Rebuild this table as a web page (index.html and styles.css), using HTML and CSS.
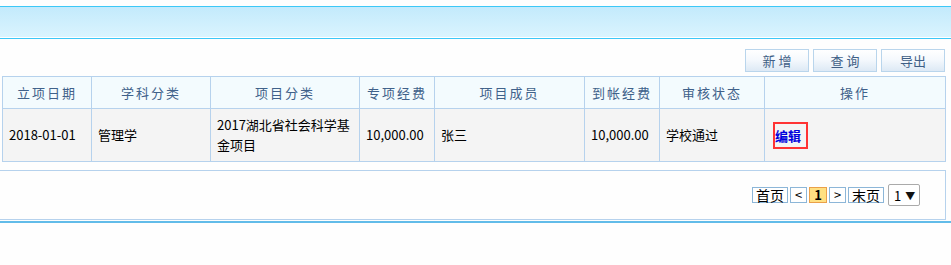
FILE: index.html
```html
<!DOCTYPE html>
<html lang="zh-CN">
<head>
<meta charset="utf-8">
<title>项目列表</title>
<link rel="stylesheet" href="styles.css">
</head>
<body>
<div class="topbar"><div class="topbar-inner"></div></div>
<div class="toolbar">
  <button class="tbtn">新 增</button>
  <button class="tbtn">查 询</button>
  <button class="tbtn">导出</button>
</div>
<table class="grid">
  <colgroup>
    <col style="width:89px"><col style="width:119px"><col style="width:149px"><col style="width:75px">
    <col style="width:150px"><col style="width:75px"><col style="width:105px"><col style="width:181px">
  </colgroup>
  <thead>
    <tr>
      <th>立项日期</th><th>学科分类</th><th>项目分类</th><th>专项经费</th>
      <th>项目成员</th><th>到帐经费</th><th>审核状态</th><th>操作</th>
    </tr>
  </thead>
  <tbody>
    <tr>
      <td>2018-01-01</td>
      <td>管理学</td>
      <td>2017湖北省社会科学基金项目</td>
      <td>10,000.00</td>
      <td>张三</td>
      <td>10,000.00</td>
      <td>学校通过</td>
      <td class="ops"><a class="edit" href="#">编辑</a></td>
    </tr>
  </tbody>
</table>
<div class="pager-panel">
  <div class="pager">
    <span class="pbtn wide">首页</span>
    <span class="pbtn">&lt;</span>
    <span class="pbtn cur">1</span>
    <span class="pbtn">&gt;</span>
    <span class="pbtn wide">末页</span>
    <span class="psel"><span class="psel-val">1</span><span class="psel-arrow">▼</span></span>
  </div>
</div>
<div class="bottom-line"></div>
</body>
</html>
```
FILE: styles.css
```css
html, body {
  margin: 0;
  padding: 0;
  background: #fefefe;
  font-family: "Noto Sans CJK SC", "Liberation Sans", sans-serif;
  font-size: 13px;
  color: #000;
}

.topbar {
  margin-top: 6px;
  border-top: 1px solid #3cc8f7;
  border-bottom: 1px solid #3cc8f7;
}
.topbar-inner {
  height: 30px;
  background: linear-gradient(to bottom, #c3eafc, #daf4fe);
  border-bottom: 1px solid #ffffff;
}

.toolbar {
  display: flex;
  justify-content: flex-end;
  gap: 4px;
  margin-top: 10px;
  padding-right: 6px;
}
.tbtn {
  width: 64px;
  height: 23px;
  padding: 0;
  border: 1px solid #b9d5ec;
  background: linear-gradient(to bottom, #ffffff 0%, #f5f9fd 45%, #dde9f5 100%);
  color: #3f5f86;
  font-family: "Noto Sans CJK SC", sans-serif;
  font-size: 13px;
  line-height: 21px;
  white-space: pre;
}

.grid {
  margin-top: 4px;
  margin-left: 2px;
  width: 944px;
  table-layout: fixed;
  border-collapse: collapse;
}
.grid th, .grid td {
  border: 1px solid #b6d2ed;
}
.grid th {
  height: 31px;
  padding: 0;
  background: #f3fbfe;
  color: #40618a;
  font-weight: normal;
  letter-spacing: 2px;
  text-align: center;
}
.grid td {
  height: 52px;
  padding: 0 5px 0 6px;
  background: #f4f4f4;
  text-align: left;
  vertical-align: middle;
  line-height: 20px;
}
.grid td.ops {
  padding-left: 8px;
}
.edit {
  display: inline-block;
  color: #0000dd;
  text-decoration: none;
  font-weight: bold;
  border: 2px solid #ff3333;
  padding: 2px 5px 2px 0;
  line-height: 19px;
}

.pager-panel {
  margin-top: 8px;
  margin-left: -1px;
  width: 945px;
  height: 48px;
  border: 1px solid #b6d2ed;
  display: flex;
  align-items: center;
  justify-content: flex-end;
}
.pager {
  display: flex;
  align-items: center;
  gap: 2px;
  padding-right: 25px;
  font-family: "Noto Sans CJK SC", sans-serif;
}
.pbtn {
  box-sizing: border-box;
  width: 17px;
  height: 16px;
  border: 1px solid #8cb6d8;
  background: #fff;
  font-size: 13px;
  line-height: 14px;
  text-align: center;
  color: #000;
}
.pbtn.wide {
  width: 36px;
  font-size: 14px;
}
.pbtn.cur {
  width: 18px;
  background: #ffe082;
  border-color: #eaa04a;
  font-weight: bold;
}
.psel {
  box-sizing: border-box;
  margin-left: 2px;
  width: 32px;
  height: 22px;
  border: 1px solid #aaaaaa;
  border-radius: 2px;
  background: #fff;
  display: flex;
  align-items: center;
  padding-left: 5px;
  gap: 4px;
  font-size: 13px;
}
.psel-arrow {
  font-size: 10px;
  color: #111;
}

.bottom-line {
  margin-top: 1px;
  height: 2px;
  background: #62bce9;
}
```
